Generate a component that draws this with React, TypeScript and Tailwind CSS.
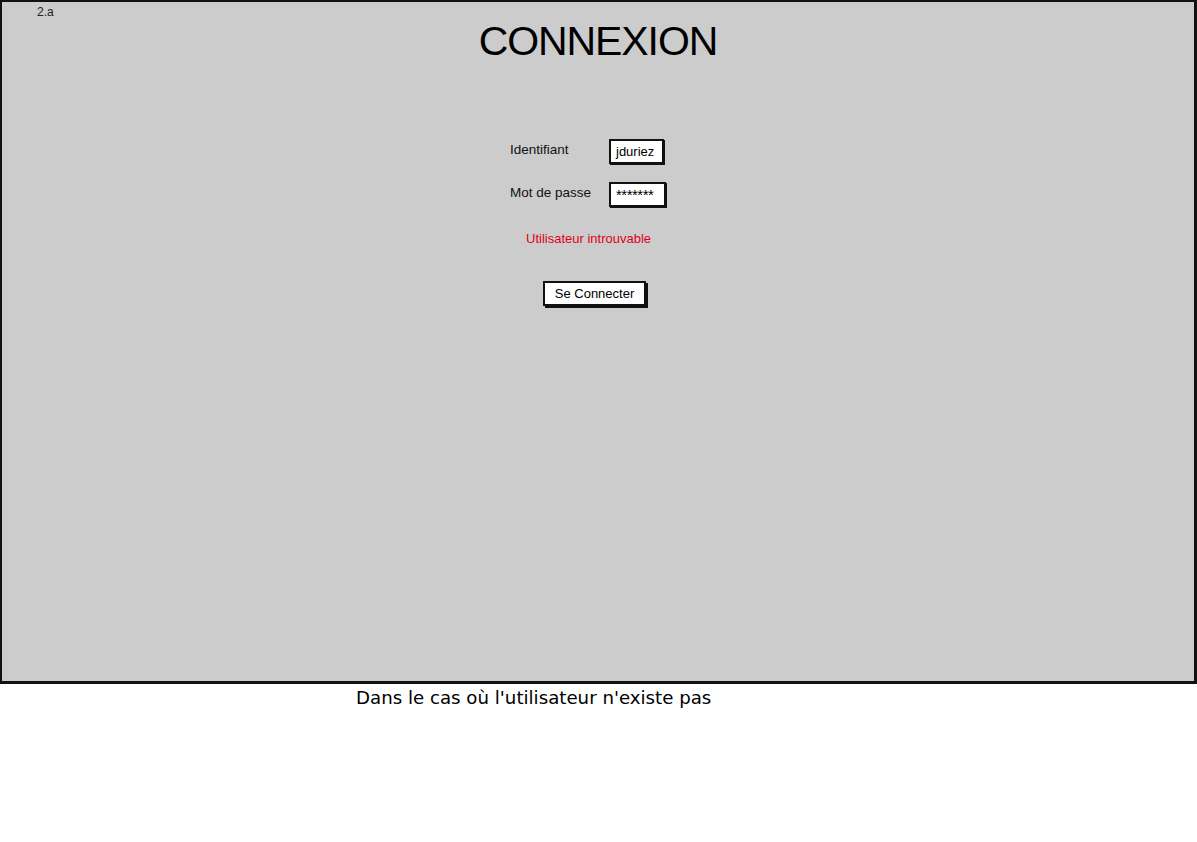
import React from 'react';

const font = { fontFamily: '"Liberation Sans", Arial, sans-serif' };
const wide = { fontFamily: '"DejaVu Sans", "Liberation Sans", sans-serif' };

function SketchInput({ value, width, size = 'text-[13px]' }: { value: string; width: string; size?: string }) {
  return (
    <div
      className={`${width} ${size} h-[25px] bg-white border-2 border-[#111] flex items-center px-[5px] text-black shadow-[1px_1px_0_#111]`}>
      {value}
    </div>);

}

export default function App() {
  return (
    <div className="w-[1197px] h-[842px] bg-white text-black" style={font}>
      <div className="h-[684px] bg-[#cccccc] border-l-2 border-t-2 border-r-[3px] border-b-[3px] border-[#111] flex flex-col">
        <div className="pl-[35px] pt-[2px] h-[18px] text-[12px] leading-[16px] text-[#222]">2.a</div>

        <h1 className="mt-[1px] text-center text-[41px] leading-[40px] tracking-[-1.1px]">CONNEXION</h1>

        <div className="mt-[78px] pl-[508px] flex flex-col">
          <div className="grid grid-cols-[99px_auto] gap-y-[18px] items-center">
            <span className="text-[13.5px] text-[#111] -mt-[2px]">Identifiant</span>
            <SketchInput value="jduriez" width="w-[55px]" />
            <span className="text-[13.5px] text-[#111] -mt-[2px]">Mot de passe</span>
            <SketchInput value="*******" width="w-[57px]" size="text-[15px] leading-[15px] tracking-[-0.5px]" />
          </div>

          <p className="mt-[24px] ml-[16px] text-[13px] leading-[16px] text-[#e0001b]">Utilisateur introuvable</p>

          <div className="mt-[34px] ml-[33px]">
            <button className="w-[103px] h-[25px] bg-white border-2 border-[#111] text-[13px] text-black shadow-[2px_2px_0_#111] flex items-center justify-center">
              Se Connecter
            </button>
          </div>
        </div>
      </div>

      <p className="pl-[356px] pt-[3px] text-[18.2px] leading-[22px]" style={wide}>
        Dans le cas où l'utilisateur n'existe pas
      </p>
    </div>);

}
